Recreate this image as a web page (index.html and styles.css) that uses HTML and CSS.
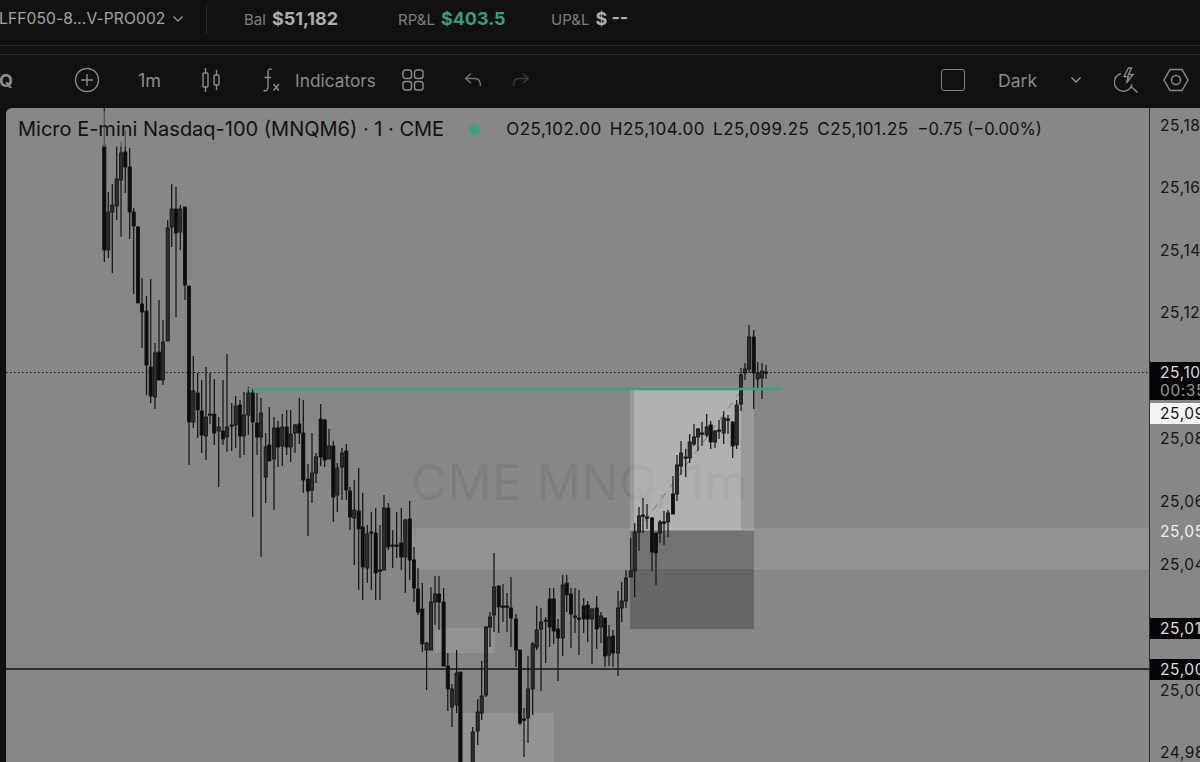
FILE: index.html
```html
<!DOCTYPE html>
<html lang="en">
<head>
  <meta charset="UTF-8">
  <meta name="viewport" content="width=device-width, initial-scale=1.0">
  <title>MNQM6 Chart</title>
  <link rel="stylesheet" href="styles.css">
</head>
<body>
  <div class="topbar">
    <div class="account">
      <span class="account-name">LFF050-8...V-PRO002</span>
      <svg class="chev" width="12" height="8" viewBox="0 0 12 8"><path d="M1.5 1.5 6 6l4.500-4.500"/></svg>
    </div>
    <div class="stats">
      <div class="stat stat-bal"><span class="stat-label">Bal</span><b>$51,182</b></div>
      <div class="stat stat-rpl"><span class="stat-label">RP&amp;L</span><b class="green">$403.5</b></div>
      <div class="stat"><span class="stat-label">UP&amp;L</span><b>$ --</b></div>
    </div>
  </div>
  <div class="subbar"></div>

  <div class="toolbar">
    <span class="symbol">IQ</span>
    <svg class="icon icon-plus" width="26" height="26" viewBox="0 0 26 26"><circle cx="13" cy="13" r="11.5"/><path d="M13 7v12M7 13h12"/></svg>
    <span class="tool-text tool-res">1m</span>
    <svg class="icon icon-candle" width="20" height="26" viewBox="0 0 20 26"><rect x="2" y="6" width="5" height="14" rx="1"/><path d="M4.5 1v5M4.5 20v5"/><rect x="13" y="8" width="5" height="10" rx="1"/><path d="M15.5 3v5M15.5 18v5"/></svg>
    <svg class="icon icon-fx" width="20" height="26" viewBox="0 0 20 26"><path d="M11 2.500C8.500 1 7 2.500 7 5v15c0 3-2 4.500-4.500 3.500M3.500 10.500H10M12.500 17l5.500 6.500M18 17l-5.500 6.500"/></svg>
    <span class="tool-text tool-ind">Indicators</span>
    <svg class="icon icon-grid" width="22" height="22" viewBox="0 0 22 22"><rect x="1" y="1" width="8.500" height="8.500" rx="2.500"/><rect x="12.500" y="1" width="8.500" height="8.500" rx="2.500"/><rect x="1" y="12.500" width="8.500" height="8.500" rx="2.500"/><rect x="12.500" y="12.500" width="8.500" height="8.500" rx="2.500"/></svg>
    <svg class="icon icon-undo" width="18" height="16" viewBox="0 0 18 16"><path d="M7 1.500 1.500 6.500 7 11M1.500 6.500H11c3.500 0 5.500 2.500 5.500 7.500"/></svg>
    <svg class="icon icon-redo" width="18" height="16" viewBox="0 0 18 16"><path d="M11 1.500l5.500 5L11 11M16.500 6.500H7C3.500 6.500 1.500 9 1.500 14"/></svg>
    <span class="toolbar-gap"></span>
    <span class="square"></span>
    <span class="tool-text tool-theme">Dark</span>
    <svg class="chev chev-theme" width="12" height="8" viewBox="0 0 12 8"><path d="M1.500 1.500 6 6l4.500-4.500"/></svg>
    <svg class="icon icon-bolt" width="25" height="26" viewBox="0 0 25 26"><path d="M7 6.500a9 9 0 1 0 11 11M16.500 19l7 6.500"/><path d="M14.500 1 10 9.500h4.500L12.500 16l6.500-8.500h-4.500L17.500 1z"/></svg>
    <svg class="icon icon-hex" width="26" height="24" viewBox="0 0 26 24"><path d="M7 1.500h12l6 10.500-6 10.500H7L1 12z"/><circle cx="13" cy="12" r="4.500"/></svg>
  </div>

  <div class="chart">
    <div class="plot">
      <svg class="plot-svg" id="plot" viewBox="6 108 1143 654" width="1143" height="654">
        <text class="watermark" x="411" y="500">CME MNQ, 1m</text>
        <rect class="zone-band" x="412" y="529" width="737" height="40"/>
        <rect class="zone-small" x="435" y="628" width="60" height="25"/>
        <rect class="zone-small" x="463" y="713" width="91" height="60"/>
        <rect class="profit-side" x="630" y="389" width="124" height="141"/>
        <rect class="profit" x="634" y="389" width="107" height="141"/>
        <rect class="stop" x="630" y="531" width="124" height="98"/>
        <rect class="stop-band" x="630" y="531" width="124" height="38"/>
        <path class="dash" d="M645 521 741 391"/>
        <path class="last-line" d="M6 372.500H1149"/>
        <path class="level-line" d="M6 669H1149"/>
        <g id="candles"></g>
        <path class="entry-fade" d="M246 389H254"/>
        <path class="entry" d="M254 389H781"/>
      </svg>
      <div class="legend">
        <span class="legend-title">Micro E-mini Nasdaq-100 (MNQM6) · 1 · CME</span>
        <span class="legend-dot"></span>
        <div class="legend-ohlc">
          <span>O25,102.00</span>
          <span>H25,104.00</span>
          <span>L25,099.25</span>
          <span>C25,101.25</span>
          <span class="legend-change">−0.75 (−0.00%)</span>
        </div>
      </div>
    </div>
    <div class="axis">
      <span class="price" style="top:8px">25,18</span>
      <span class="price" style="top:70px">25,16</span>
      <span class="price" style="top:133px">25,14</span>
      <span class="price" style="top:195px">25,12</span>
      <span class="tag tag-last" style="top:254px">25,10<small>00:35</small></span>
      <span class="tag tag-white" style="top:295px">25,09</span>
      <span class="price" style="top:321px">25,08</span>
      <span class="price" style="top:384px">25,06</span>
      <span class="price price-light" style="top:414px">25,05</span>
      <span class="price" style="top:447px">25,04</span>
      <span class="tag" style="top:510px">25,01</span>
      <span class="tag" style="top:551px">25,00</span>
      <span class="price" style="top:573px">25,00</span>
      <span class="price" style="top:635px">24,98</span>
    </div>
  </div>

  <script src="script.js"></script>
</body>
</html>
```

FILE: styles.css
```css
body {
  margin: 0;
  height: 762px;
  overflow: hidden;
  background-color: #111112;
  color: #9a9a9a;
  font-family: Inter, 'Liberation Sans', sans-serif;
  display: flex;
  flex-direction: column;
}

.topbar {
  height: 46px;
  box-sizing: border-box;
  border-bottom: 1px solid #2a2a2a;
  display: flex;
  align-items: center;
  padding-bottom: 8px;
}

.account {
  width: 207px;
  height: 30px;
  box-sizing: border-box;
  border-right: 1px solid #2b2b2b;
  display: flex;
  align-items: center;
  gap: 7px;
  font-size: 15.6px;
  color: #a3a3a3;
  white-space: nowrap;
}

.account-name {
  margin-left: -1px;
  letter-spacing: 0.1px;
}

.chev {
  fill: none;
  stroke: #9a9a9a;
  stroke-width: 1.3;
}

.stats {
  display: flex;
  align-items: baseline;
  margin-left: 37px;
}

.stat {
  display: flex;
  align-items: baseline;
  gap: 6px;
  font-size: 15px;
}

.stat-bal {
  width: 154px;
}

.stat-rpl {
  width: 153px;
}

.stat-label {
  color: #7d7d7d;
}

.stat b {
  font-size: 18px;
  font-weight: 700;
  color: #adadad;
}

.stat b.green {
  color: #3c9a80;
}

.subbar {
  height: 8px;
  border-bottom: 1px solid #262626;
}

.toolbar {
  height: 53px;
  box-sizing: border-box;
  padding-bottom: 3px;
  display: flex;
  align-items: center;
  color: #8b8b8b;
}

.symbol {
  width: 80px;
  margin-left: -6px;
  font-size: 18px;
  font-weight: 700;
  color: #8d8d8d;
}

.icon {
  flex: none;
  fill: none;
  stroke: #8c8c8c;
  stroke-width: 1.4;
}

.tool-text {
  font-size: 17.5px;
}

.tool-res {
  margin-left: 38px;
  font-size: 18px;
}

.icon-candle {
  margin-left: 40px;
}

.icon-fx {
  margin-left: 40px;
}

.tool-ind {
  margin-left: 14px;
  font-size: 17.3px;
}

.icon-grid {
  margin-left: 26px;
}

.icon-undo {
  margin-left: 40px;
  stroke: #707070;
}

.icon-redo {
  margin-left: 30px;
  stroke: #3c3c3c;
}

.toolbar-gap {
  flex: 1;
}

.square {
  width: 22px;
  height: 20px;
  border: 1.5px solid #808080;
  border-radius: 3px;
}

.tool-theme {
  margin-left: 33px;
}

.chev-theme {
  margin-left: 33px;
}

.icon-bolt {
  margin-left: 32px;
}

.icon-hex {
  margin-left: 24px;
  margin-right: 11px;
}

.chart {
  flex: 1;
  display: flex;
  margin-left: 6px;
  background-color: #878787;
  border-top-left-radius: 6px;
  overflow: hidden;
}

.plot {
  width: 1143px;
  position: relative;
  border-right: 1px solid #2e2e2e;
}

.plot-svg {
  display: block;
}

.watermark {
  font-size: 49px;
  fill: #7e7e7e;
  letter-spacing: 0.6px;
}

.zone-band {
  fill: #fff;
  fill-opacity: 0.09;
  stroke: #a0a0a0;
  stroke-opacity: 0.5;
}

.zone-small {
  fill: #fff;
  fill-opacity: 0.1;
}

.profit-side {
  fill: #fff;
  fill-opacity: 0.16;
}

.profit {
  fill: #fff;
  fill-opacity: 0.22;
}

.stop {
  fill: #676767;
}

.stop-band {
  fill: #727272;
}

.dash {
  stroke: #777;
  stroke-width: 1;
  stroke-dasharray: 7 7;
}

.last-line {
  stroke: #111;
  stroke-width: 1;
  stroke-dasharray: 1.500 2.500;
}

.level-line {
  stroke: #111;
  stroke-width: 1.500;
}

.entry {
  stroke: #3f9f86;
  stroke-width: 2.500;
}

.entry-fade {
  stroke: #5f8d80;
  stroke-width: 1.500;
}

.wick {
  stroke: #111;
  stroke-width: 1.200;
}

.body {
  fill: #0d0d0d;
  stroke: #111;
  stroke-width: 0.800;
}

.body-up {
  fill: #2e2e2e;
}

.legend {
  position: absolute;
  left: 0;
  top: 3px;
  width: 1060px;
  height: 36px;
  display: flex;
  align-items: center;
  background-color: rgba(135, 135, 135, 0.55);
  color: #111;
  white-space: nowrap;
}

.legend-title {
  margin-left: 12px;
  font-size: 20px;
}

.legend-dot {
  width: 11px;
  height: 11px;
  margin-left: 25px;
  border-radius: 50%;
  background-color: #3f9f86;
}

.legend-ohlc {
  display: flex;
  gap: 8px;
  margin-left: 26px;
  font-size: 17px;
  letter-spacing: 0.5px;
}

.legend-change {
  margin-left: 1px;
  font-size: 16.6px;
  letter-spacing: 0;
}

.axis {
  flex: 1;
  position: relative;
  overflow: hidden;
  font-size: 15.500px;
  letter-spacing: 0.6px;
  color: #151515;
}

.price,
.tag {
  position: absolute;
  left: 0;
  padding-left: 10px;
  width: 41px;
  white-space: nowrap;
}

.price-light {
  color: #eee;
}

.tag {
  height: 21px;
  line-height: 21px;
  background-color: #050505;
  color: #ddd;
}

.tag-last {
  height: 38px;
}

.tag-last small {
  display: block;
  font-size: 15.500px;
  line-height: 15px;
  color: #999;
}

.tag-white {
  background-color: #f4f4f4;
  color: #111;
}
```

FILE: script.js
```js
// x, wick top, wick bottom, body top, body bottom, up
const candles = [
  [104.3,108,262,145,250,0],[108.3,192,258,212,250,1],[112.3,184,273,205,212,1],[116.7,146,220,179,206,1],
  [121,142,237,153,180,1],[125.3,130,193,152,167,0],[129.7,148,239,167,212,0],[133.7,208,294,212,226,0],
  [138,226,303,227,303,0],[142,278,348,304,312,0],[146.5,296,395,311,365,0],[150.7,279,403,367,396,0],
  [155,343,409,353,397,1],[159,300,380,352,380,0],[163,320,385,342,380,1],[167.7,220,341,228,341,1],
  [171.7,184,247,209,227,1],[176,187,317,209,233,0],[180.3,205,250,209,232,1],[185,207,300,207,285,0],
  [189,286,465,286,422,0],[193.3,356,428,391,422,1],[197.7,373,438,393,410,0],[201.7,380,453,411,435,0],
  [206,367,460,417,436,1],[210,373,424,414,414,0],[214.3,379,445,414,433,0],[218.7,417,487,427,431,1],
  [223,380,445,431,439,0],[227,354,452,427,437,1],[231.7,403,451,425,425,0],[235.7,396,448,406,425,1],
  [240,400,458,405,436,0],[244,392,455,415,436,1],[248.3,387,435,393,415,1],[252.7,388,517,393,422,0],
  [257,393,455,423,437,0],[261,398,557,413,437,1],[265.7,433,503,447,477,1],[269.3,407,461,445,461,0],
  [274,417,510,428,459,1],[278,421,467,428,447,0],[282.3,414,466,427,446,1],[286.7,410,455,427,447,0],
  [290.7,410,462,434,447,1],[295,424,453,425,433,1],[299.3,398,444,424,433,0],[303.3,400,493,433,480,0],
  [308,464,536,479,491,0],[312,433,503,473,490,1],[316,453,483,457,473,1],[320.7,404,466,419,457,0],
  [324.7,419,467,420,460,0],[329,429,459,446,459,1],[333.3,441,522,446,497,0],[337.3,463,512,468,495,1],
  [342,448,500,453,467,1],[346.3,444,500,451,490,0],[350,487,530,491,517,0],[354.3,480,565,510,518,1],
  [358.7,468,590,511,529,0],[362.7,493,600,527,567,0],[367.3,525,583,534,568,1],[371.3,512,590,532,532,0],
  [375.7,508,600,533,573,0],[380,525,600,570,570,0],[384,495,570,508,570,1],[388.3,503,550,508,547,0],
  [392.7,530,568,545,545,0],[396.7,512,558,545,545,0],[401.3,508,570,543,557,0],[405.3,519,593,520,557,1],
  [409.7,501,580,519,560,0],[414,547,602,560,588,0],[418,568,615,589,612,0],[422.3,583,652,609,644,0],
  [426.6,642,690,643,650,1],[431,587,650,602,650,1],[435,576,625,594,602,1],[439,576,630,594,602,0],
  [443.6,588,666,602,666,0],[447.8,653,711,666,689,0],[452,684,727,689,707,1],[456.6,650,713,673,705,1],
  [460.4,672,770,672,770,0],[472.7,727,770,732,770,1],[477.7,699,745,712,731,1],[481.7,661,720,696,713,1],
  [486,626,697,627,695,1],[490,612,647,617,627,1],[494,553,632,587,615,1],[498.7,585,633,586,607,0],
  [503,584,622,606,606,0],[507,593,632,606,606,0],[511,577,647,608,618,0],[516,614,667,619,650,0],
  [520,650,725,650,723,0],[524,708,757,719,719,0],[528,656,743,689,718,1],[532.7,642,715,644,689,1],
  [536.7,606,650,630,647,1],[541,608,691,622,629,1],[545.7,617,663,620,620,0],[549.7,588,647,599,627,0],
  [553.7,588,644,599,631,0],[558,619,681,629,638,0],[562.7,575,656,585,638,1],[566.7,575,612,583,595,0],
  [571,588,648,594,614,0],[575,588,633,616,616,0],[579,590,655,618,618,0],[583.7,598,633,606,619,0],
  [587.7,601,642,605,619,0],[592,608,664,609,619,1],[596.7,596,649,608,629,0],[601,612,643,616,627,1],
  [605,618,667,618,656,0],[609,625,666,637,655,1],[613,630,667,636,653,0],[618,591,676,608,653,1],
  [621.7,582,622,601,608,1],[626,570,608,578,601,1],[630.7,538,577,571,577,1],[634.7,523,597,532,571,1],
  [639,507,551,516,532,1],[643,498,533,515,515,0],[647,504,529,517,517,0],[652,517,571,518,552,0],
  [656,533,585,533,553,0],[660,520,543,522,533,1],[664,511,545,522,522,0],[668,510,537,513,522,1],
  [673,476,514,494,514,0],[677,455,501,465,494,1],[681,441,475,453,466,1],[685.7,449,477,457,458,0],
  [689.7,434,463,442,458,1],[694,424,446,437,444,1],[698,428,451,429,437,1],[702,422,446,433,433,0],
  [706.7,414,437,427,435,1],[710.7,421,449,425,442,0],[715,430,448,431,442,1],[719,420,439,430,430,0],
  [723.7,411,444,418,433,1],[728,415,434,419,419,0],[732.7,421,458,422,446,0],[736.7,400,449,405,445,1],
  [741,368,411,375,404,1],[745,363,380,369,373,1],[749,325,373,337,369,1],[753.7,330,409,337,373,0],
  [757.7,362,388,373,379,1],[762,363,399,371,378,1],[766,365,379,372,372,0]
];

const svgNs = 'http://www.w3.org/2000/svg';
const group = document.getElementById('candles');

candles.forEach(([x, high, low, top, bottom, up]) => {
  const wick = document.createElementNS(svgNs, 'line');
  wick.setAttribute('class', 'wick');
  wick.setAttribute('x1', x);
  wick.setAttribute('x2', x);
  wick.setAttribute('y1', high);
  wick.setAttribute('y2', low);
  group.appendChild(wick);

  const body = document.createElementNS(svgNs, 'rect');
  body.setAttribute('class', up ? 'body body-up' : 'body');
  body.setAttribute('x', x - 1.6);
  body.setAttribute('y', top);
  body.setAttribute('width', 3.2);
  body.setAttribute('height', Math.max(bottom - top, 1.2));
  group.appendChild(body);
});
```
